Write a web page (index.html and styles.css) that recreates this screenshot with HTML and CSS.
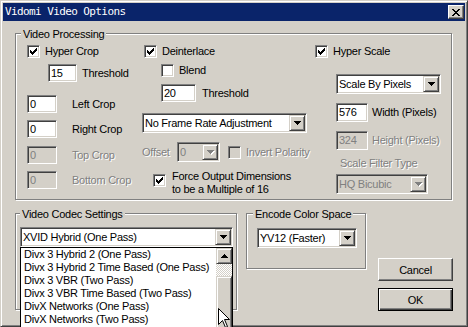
FILE: index.html
```html
<!DOCTYPE html>
<html>
<head>
<meta charset="utf-8">
<title>Vidomi Video Options</title>
<link rel="stylesheet" href="styles.css">
</head>
<body>
<div class="window">
  <div class="titlebar">
    <span class="title">Vidomi Video Options</span>
    <span class="close"><svg width="8" height="7" viewBox="0 0 8 7"><path d="M0 0h2v1h-2zM6 0h2v1h-2zM1 1h2v1h-2zM5 1h2v1h-2zM2 2h4v1h-4zM3 3h2v1h-2zM2 4h4v1h-4zM1 5h2v1h-2zM5 5h2v1h-2zM0 6h2v1h-2zM6 6h2v1h-2z"/></svg></span>
  </div>
  <div class="client">
    <div class="group vp">
      <span class="legend">Video Processing</span>
      <div class="col col-left">
        <div class="row check-row"><span class="cb"><svg width="9" height="9" viewBox="0 0 9 9"><path d="M1 3h1v3h-1zM2 4h1v3h-1zM3 5h1v3h-1zM4 4h1v3h-1zM5 3h1v3h-1zM6 2h1v3h-1zM7 1h1v3h-1z"/></svg></span><span class="cb-label">Hyper Crop</span></div>
        <div class="row thr-row"><span class="edit thr1">15</span><span class="lbl gap5">Threshold</span></div>
        <div class="row crop-row crop-first"><span class="edit crop">0</span><span class="lbl gap15">Left Crop</span></div>
        <div class="row crop-row crop-a"><span class="edit crop">0</span><span class="lbl gap15">Right Crop</span></div>
        <div class="row crop-row crop-b"><span class="edit crop dis">0</span><span class="lbl gap15 dis-text">Top Crop</span></div>
        <div class="row crop-row crop-a"><span class="edit crop dis">0</span><span class="lbl gap15 dis-text">Bottom Crop</span></div>
      </div>
      <div class="col col-mid">
        <div class="row check-row deint"><span class="cb"><svg width="9" height="9" viewBox="0 0 9 9"><path d="M1 3h1v3h-1zM2 4h1v3h-1zM3 5h1v3h-1zM4 4h1v3h-1zM5 3h1v3h-1zM6 2h1v3h-1zM7 1h1v3h-1z"/></svg></span><span class="cb-label">Deinterlace</span></div>
        <div class="row check-row blend"><span class="cb"></span><span class="cb-label">Blend</span></div>
        <div class="row thr2-row"><span class="edit thr2">20</span><span class="lbl gap6">Threshold</span></div>
        <div class="combo frame"><span class="combo-text">No Frame Rate Adjustment</span><span class="combo-btn"><svg width="7" height="4" viewBox="0 0 7 4"><path d="M0 0h7v1h-7zM1 1h5v1h-5zM2 2h3v1h-3zM3 3h1v1h-1z"/></svg></span></div>
        <div class="row offset-row">
          <span class="lbl offset-lbl dis-text">Offset</span>
          <div class="combo dis offset"><span class="combo-text">0</span><span class="combo-btn"><svg width="8" height="5" viewBox="0 0 8 5"><path class="sh" d="M1 1h7v1h-7zM2 2h5v1h-5zM3 3h3v1h-3zM4 4h1v1h-1z"/><path class="gr" d="M0 0h7v1h-7zM1 1h5v1h-5zM2 2h3v1h-3zM3 3h1v1h-1z"/></svg></span></div>
          <span class="cb dis invert"></span><span class="cb-label dis-text gap6">Invert Polarity</span>
        </div>
        <div class="row force-row"><span class="cb"><svg width="9" height="9" viewBox="0 0 9 9"><path d="M1 3h1v3h-1zM2 4h1v3h-1zM3 5h1v3h-1zM4 4h1v3h-1zM5 3h1v3h-1zM6 2h1v3h-1zM7 1h1v3h-1z"/></svg></span><span class="force-label">Force Output Dimensions<br>to be a Multiple of 16</span></div>
      </div>
      <div class="col col-right">
        <div class="row check-row"><span class="cb"><svg width="9" height="9" viewBox="0 0 9 9"><path d="M1 3h1v3h-1zM2 4h1v3h-1zM3 5h1v3h-1zM4 4h1v3h-1zM5 3h1v3h-1zM6 2h1v3h-1zM7 1h1v3h-1z"/></svg></span><span class="cb-label">Hyper Scale</span></div>
        <div class="combo scale"><span class="combo-text">Scale By Pixels</span><span class="combo-btn"><svg width="7" height="4" viewBox="0 0 7 4"><path d="M0 0h7v1h-7zM1 1h5v1h-5zM2 2h3v1h-3zM3 3h1v1h-1z"/></svg></span></div>
        <div class="row px-row px-first"><span class="edit px">576</span><span class="lbl gap4">Width (Pixels)</span></div>
        <div class="row px-row"><span class="edit px dis">324</span><span class="lbl gap4 dis-text">Height (Pixels)</span></div>
        <div class="filter-lbl dis-text">Scale Filter Type</div>
        <div class="combo dis hq"><span class="combo-text">HQ Bicubic</span><span class="combo-btn"><svg width="8" height="5" viewBox="0 0 8 5"><path class="sh" d="M1 1h7v1h-7zM2 2h5v1h-5zM3 3h3v1h-3zM4 4h1v1h-1z"/><path class="gr" d="M0 0h7v1h-7zM1 1h5v1h-5zM2 2h3v1h-3zM3 3h1v1h-1z"/></svg></span></div>
      </div>
    </div>
    <div class="bottom">
      <div class="group codec">
        <span class="legend codec-legend">Video Codec Settings</span>
        <div class="combo xvid"><span class="combo-text">XVID Hybrid (One Pass)</span><span class="combo-btn"><svg width="7" height="4" viewBox="0 0 7 4"><path d="M0 0h7v1h-7zM1 1h5v1h-5zM2 2h3v1h-3zM3 3h1v1h-1z"/></svg></span></div>
      </div>
      <div class="group ecs">
        <span class="legend ecs-legend">Encode Color Space</span>
        <div class="combo yv"><span class="combo-text">YV12 (Faster)</span><span class="combo-btn"><svg width="7" height="4" viewBox="0 0 7 4"><path d="M0 0h7v1h-7zM1 1h5v1h-5zM2 2h3v1h-3zM3 3h1v1h-1z"/></svg></span></div>
      </div>
      <div class="buttons">
        <span class="btn">Cancel</span>
        <span class="btn default">OK</span>
      </div>
    </div>
  </div>
  <div class="popup">
    <div class="items">
      <div class="item">Divx 3 Hybrid 2 (One Pass)</div>
      <div class="item">Divx 3 Hybrid 2 Time Based (One Pass)</div>
      <div class="item">Divx 3 VBR (Two Pass)</div>
      <div class="item">Divx 3 VBR Time Based (Two Pass)</div>
      <div class="item">DivX Networks (One Pass)</div>
      <div class="item">DivX Networks (Two Pass)</div>
    </div>
    <div class="sbar">
      <span class="sbtn"><svg width="7" height="4" viewBox="0 0 7 4"><path d="M3 0h1v1h-1zM2 1h3v1h-3zM1 2h5v1h-5zM0 3h7v1h-7z"/></svg></span>
      <span class="track"></span>
      <span class="thumb"></span>
    </div>
  </div>
  <svg class="cursor" width="13" height="21" viewBox="0 0 13 21"><path d="M0.5 0.5V16.5L4.5 12.5L7.5 19.5L9.5 18.5L6.5 11.5H11.5Z" fill="#fff" stroke="#000" stroke-width="1"/></svg>
</div>
</body>
</html>
```

FILE: styles.css
```css
* { box-sizing: border-box; }
html, body { margin: 0; padding: 0; overflow: hidden; }
body {
  width: 468px; height: 327px;
  font-family: "Liberation Sans", Arial, sans-serif;
  font-size: 11px; letter-spacing: -0.25px; color: #000;
  background: #d4d0c8;
}
.window {
  position: relative; width: 468px; height: 327px;
  background: #d4d0c8;
  border: 1px solid; border-color: #d4d0c8 #404040 #404040 #d4d0c8;
  box-shadow: inset 1px 1px #fff, inset -1px -1px #808080;
  padding: 2px;
}
.titlebar {
  height: 18px; background: #0a246a;
  display: flex; align-items: center; justify-content: space-between;
  padding: 0 1px 0 2px;
}
.title {
  color: #fff; font-family: "DejaVu Sans Mono", monospace;
  font-size: 11px; letter-spacing: -0.6px; line-height: 18px; white-space: nowrap;
}
.close {
  width: 16px; height: 14px; display: flex; align-items: center; justify-content: center;
  background: #d4d0c8; border: 1px solid; border-color: #fff #404040 #404040 #fff;
  box-shadow: inset -1px -1px #808080;
}
.group { position: relative; border: 1px solid #808080; box-shadow: inset 1px 1px #fff, 1px 1px #fff; }
.legend {
  position: absolute; top: -6px; left: 5px; padding: 0 2px;
  background: #d4d0c8; line-height: 13px; white-space: nowrap;
}
.codec-legend { left: 4px; }
.ecs-legend { left: 6px; }
.vp { margin: 12px 0 0 12px; width: 437px; height: 167px; padding: 11px 0 0 11px; display: flex; }
.col { display: flex; flex-direction: column; }
.col-left { width: 115px; }
.col-mid { width: 173px; }
.col-right { flex: 1; }
.row { display: flex; align-items: center; white-space: nowrap; }
.lbl, .cb-label { line-height: 13px; }
.gap4 { margin-left: 4px; }
.gap5 { margin-left: 5px; }
.gap6 { margin-left: 6px; }
.gap15 { margin-left: 15px; }
.dis-text { color: #808080; text-shadow: 1px 1px 0 #fff; }

.check-row { height: 13px; }
.cb {
  width: 13px; height: 13px; flex: none; padding: 1px;
  border: 1px solid; border-color: #808080 #fff #fff #808080;
  box-shadow: inset 1px 1px #404040, inset -1px -1px #d4d0c8;
  background: #fff;
}
.cb svg { display: block; }
.cb.dis { background: #d4d0c8; }
.cb-label { margin-left: 5px; }

.edit {
  height: 18px; flex: none; padding: 0 2px; line-height: 16px;
  border: 1px solid; border-color: #808080 #fff #fff #808080;
  box-shadow: inset 1px 1px #404040, inset -1px -1px #d4d0c8;
  background: #fff;
}
.edit.dis { background: #d4d0c8; color: #808080; }
.thr-row { margin: 6px 0 0 21px; }
.thr1 { width: 29px; }
.crop { width: 30px; }
.crop-first { margin-top: 13px; }
.crop-a { margin-top: 7px; }
.crop-b { margin-top: 8px; }

.deint { margin-left: 2px; }
.blend { margin: 6px 0 0 19px; }
.thr2-row { margin: 7px 0 0 19px; }
.thr2 { width: 35px; }

.combo {
  display: flex; height: 20px; flex: none; padding: 1px;
  border: 1px solid; border-color: #808080 #fff #fff #808080;
  box-shadow: inset 1px 1px #404040, inset -1px -1px #d4d0c8;
  background: #fff;
}
.combo-text { flex: 1; padding-left: 1px; line-height: 16px; white-space: nowrap; overflow: hidden; }
.combo-btn, .sbtn {
  width: 16px; height: 16px; flex: none; display: flex; align-items: center; justify-content: center;
  background: #d4d0c8; border: 1px solid; border-color: #d4d0c8 #404040 #404040 #d4d0c8;
  box-shadow: inset 1px 1px #fff, inset -1px -1px #808080;
}
.combo.dis { background: #d4d0c8; color: #808080; }
.combo.dis .combo-btn svg { margin: 1px 0 0 1px; }
.sh { fill: #fff; }
.gr { fill: #808080; }
.frame { width: 165px; margin-top: 11px; }
.offset-row { margin-top: 9px; height: 20px; }
.offset-lbl { width: 35px; }
.offset { width: 43px; }
.invert { margin-left: 8px; }
.force-row { margin: 12px 0 0 11px; align-items: flex-start; }
.force-label { margin: -4px 0 0 6px; line-height: 13px; }

.scale { width: 105px; margin: 16px 0 0 21px; }
.px-row { margin: 9px 0 0 21px; }
.px { width: 32px; height: 19px; line-height: 17px; }
.filter-lbl { margin: 7px 0 0 25px; line-height: 13px; white-space: nowrap; }
.hq { width: 92px; margin: 4px 0 0 21px; }

.bottom { display: flex; align-items: flex-start; margin: 13px 0 0 12px; }
.codec { width: 222px; height: 97px; padding: 13px 0 0 4px; }
.xvid { width: 213px; }
.ecs { width: 120px; height: 56px; margin-left: 9px; padding: 14px 0 0 10px; }
.yv { width: 100px; }
.buttons { display: flex; flex-direction: column; gap: 7px; margin: 45px 0 0 12px; }
.btn {
  width: 75px; height: 23px; display: flex; align-items: center; justify-content: center;
  background: #d4d0c8; border: 1px solid; border-color: #fff #404040 #404040 #fff;
  box-shadow: inset -1px -1px #808080;
}
.btn.default {
  border-color: #000;
  box-shadow: inset 1px 1px #fff, inset -1px -1px #404040, inset -2px -2px #808080;
}

.popup {
  position: absolute; left: 19px; top: 246px; width: 213px; height: 81px;
  border: 1px solid #000; border-bottom: 0; background: #fff; display: flex;
}
.items { flex: 1; padding-left: 3px; }
.item { line-height: 13px; white-space: nowrap; }
.sbar { width: 16px; display: flex; flex-direction: column; }
.track { height: 12px; background: repeating-conic-gradient(#fff 0 25%, #d4d0c8 0 50%) 0 0 / 2px 2px; }
.thumb {
  flex: 1; background: #d4d0c8; border: 1px solid; border-bottom: 0; border-color: #d4d0c8 #404040 #404040 #d4d0c8;
  box-shadow: inset 1px 1px #fff, inset -1px 0 #808080;
}
.cursor { position: absolute; left: 217px; top: 307px; }
```
